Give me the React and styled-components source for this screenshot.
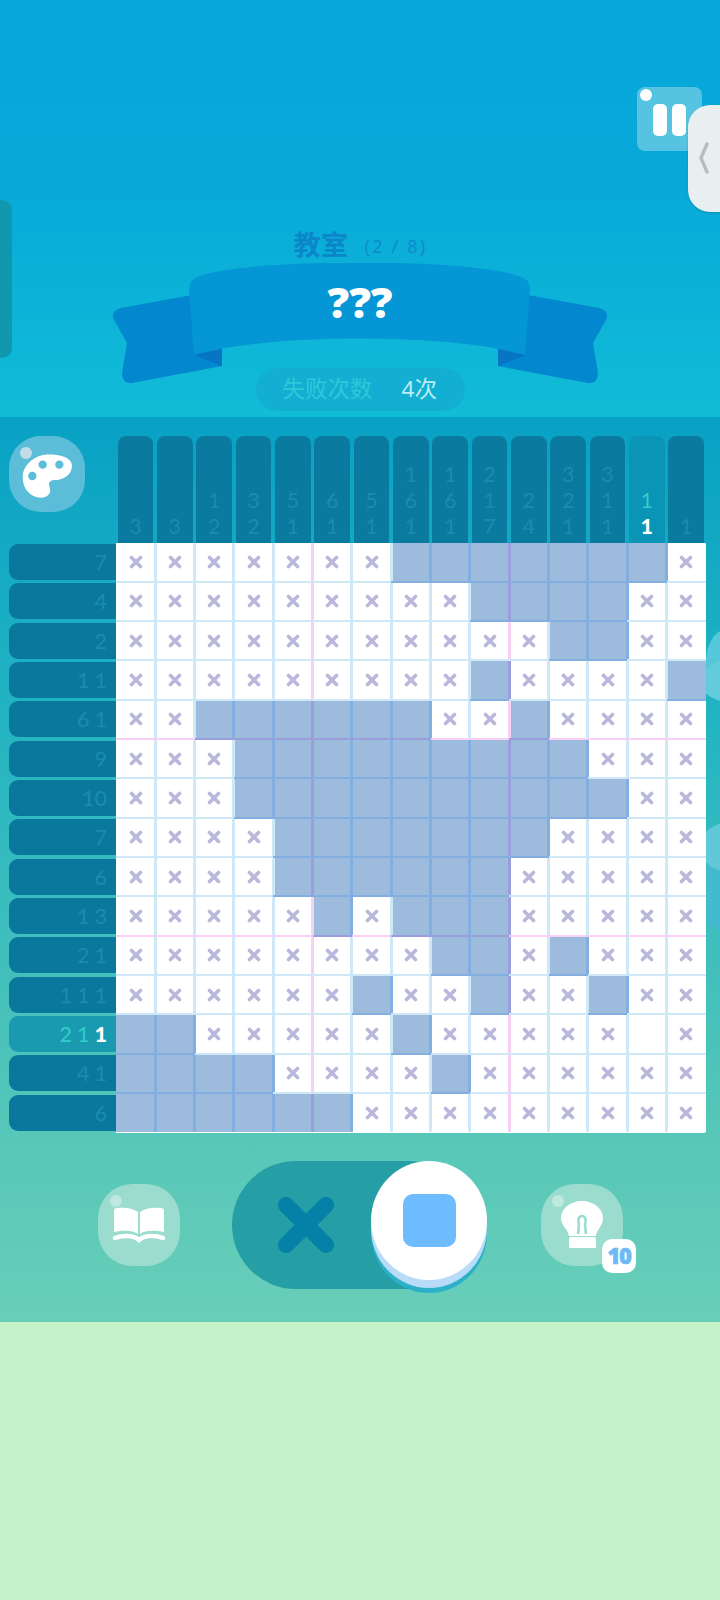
import styled, { createGlobalStyle } from "styled-components";

const GlobalStyle = createGlobalStyle`
  html, body {
    margin: 0;
    padding: 0;
    background: #c5f2c9;
  }
  * {
    box-sizing: border-box;
  }
`;

const FONT = `"Noto Sans", "Noto Sans CJK SC", sans-serif`;

const Page = styled.div`
  position: relative;
  width: 720px;
  height: 1600px;
  overflow: hidden;
  background: #c5f2c9;
  font-family: ${FONT};
`;

const Header = styled.header`
  position: relative;
  height: 417px;
  padding-top: 87px;
  display: flex;
  flex-direction: column;
  align-items: center;
  background: linear-gradient(180deg, #07a6da 0%, #08a9d9 45%, #11bcd6 100%);
`;

const PauseButton = styled.div`
  position: relative;
  align-self: flex-end;
  margin-right: 18px;
  width: 65px;
  height: 64px;
  border-radius: 8px;
  background: #57c3e2;
  display: flex;
  justify-content: center;
  gap: 5px;
  padding-top: 17px;
`;

const PauseBar = styled.span`
  width: 14px;
  height: 32px;
  border-radius: 5px;
  background: #fff;
`;

const Shine = styled.span`
  position: absolute;
  left: ${(p) => p.$left}px;
  top: ${(p) => p.$top}px;
  width: 12px;
  height: 12px;
  border-radius: 50%;
  background: ${(p) => p.$color};
`;

const SideHandle = styled.div`
  position: absolute;
  top: 105px;
  right: -20px;
  width: 52px;
  height: 107px;
  border-radius: 22px;
  background: #e9eef1;
  box-shadow: 0 1px 2px rgba(0, 60, 90, 0.25);
  padding: 37px 0 0 11px;
`;

const LeftTab = styled.div`
  position: absolute;
  top: 200px;
  left: -10px;
  width: 22px;
  height: 158px;
  border-radius: 10px;
  background: #0f98ae;
`;

const TitleRow = styled.div`
  margin-top: 74px;
  height: 37px;
  padding-left: 1px;
  display: flex;
  align-items: flex-end;
  justify-content: center;
  gap: 16px;
  color: #0a86c9;
`;

const TitleText = styled.span`
  font-size: 27px;
  line-height: 35px;
  font-weight: 700;
  letter-spacing: 0.5px;
`;

const TitleCount = styled.span`
  font-size: 18px;
  line-height: 31px;
  font-weight: 400;
  letter-spacing: 2.2px;
  color: #0d8bcc;
`;

const RibbonWrap = styled.div`
  position: relative;
  width: 496px;
  height: 121px;
  margin-top: 1px;
  padding-top: 14px;
  display: flex;
  justify-content: center;
  color: #fff;
  font-size: 43px;
  line-height: 50px;
  font-weight: 800;
  font-family: "Open Sans", sans-serif;
`;

const RibbonArt = styled.svg`
  position: absolute;
  left: 0;
  top: 0;
`;

const RibbonLabel = styled.span`
  position: relative;
`;

const Pill = styled.div`
  position: relative;
  margin-top: -16px;
  width: 209px;
  height: 43px;
  border-radius: 22px;
  background: #13afd3;
  padding: 0 0 5px 27px;
  display: flex;
  align-items: center;
  gap: 29px;
  font-size: 22.5px;
`;

const PillLabel = styled.span`
  color: #2dc9d9;
`;

const PillValue = styled.span`
  color: #b7edf3;
`;

const Board = styled.section`
  position: relative;
  height: 905px;
  background: linear-gradient(180deg, #08a1c5 0%, #22b3c2 32%, #56c7b8 79%, #69ceb9 100%);
`;

const BoardTop = styled.div`
  display: flex;
  height: 125.5px;
  padding-top: 19px;
`;

const PaletteSlot = styled.div`
  width: 116px;
  padding-left: 9px;
`;

const RoundButton = styled.div`
  position: relative;
  display: flex;
  align-items: center;
  justify-content: center;
  flex: none;
  width: ${(p) => p.$size}px;
  height: ${(p) => p.$size}px;
  border-radius: ${(p) => p.$size * 0.42}px;
  background: ${(p) => p.$color};
`;

const ColumnClues = styled.div`
  width: 590px;
  display: grid;
  grid-template-columns: repeat(15, 1fr);
`;

const ColumnClue = styled.div`
  margin: 0 2px 0 1.7px;
  border-radius: 8px 8px 0 0;
  background: ${(p) => (p.$active ? "#0a94b5" : "#0a7a9e")};
  display: flex;
  flex-direction: column;
  justify-content: flex-end;
  align-items: center;
  padding-bottom: 4px;
`;

const BoardBody = styled.div`
  display: flex;
`;

const RowClues = styled.div`
  width: 116px;
  display: grid;
  grid-template-rows: repeat(15, 1fr);
  padding-left: 9.3px;
`;

const RowClue = styled.div`
  margin: 1.6px 0 1.8px;
  border-radius: 9px 0 0 9px;
  background: ${(p) => (p.$active ? "#1a9ab0" : "#0a789c")};
  display: flex;
  justify-content: flex-end;
  align-items: center;
  gap: 5px;
  padding-right: 9px;
`;

const Digit = styled.span`
  font-family: Lato, sans-serif;
  font-size: 21.5px;
  line-height: 26px;
  font-weight: ${(p) => (p.$tone === "done" ? 900 : 400)};
  color: ${(p) =>
    p.$tone === "done" ? "#ffffff" : p.$tone === "live" ? "#31cccb" : "#1a8dab"};
`;

const Grid = styled.div`
  width: 590px;
  height: 590px;
  display: grid;
  grid-template-columns: repeat(15, 1fr);
  grid-template-rows: repeat(15, 1fr);
  background: #fff;
  border-radius: 0 2px 2px 0;
  overflow: hidden;
`;

const lineColor = (major, filled) => {
  if (major) return filled ? "#9a9fdc" : "#f8d0f4";
  return filled ? "#82aee0" : "#cfe8f8";
};

const Cell = styled.div`
  position: relative;
  display: flex;
  align-items: center;
  justify-content: center;
  background: ${(p) => (p.$filled ? "#9dbcdd" : "#fff")};

  &::after {
    content: "";
    display: ${(p) => (p.$lastCol ? "none" : "block")};
    position: absolute;
    z-index: 1;
    top: 0;
    bottom: 0;
    right: -1.5px;
    width: 3px;
    background: ${(p) => lineColor(p.$majorCol, p.$filled)};
  }

  &::before {
    content: "";
    display: ${(p) => (p.$lastRow ? "none" : "block")};
    position: absolute;
    z-index: 2;
    left: 0;
    right: 0;
    bottom: -1px;
    height: 2px;
    background: ${(p) => lineColor(p.$majorRow, p.$filled)};
  }
`;

const Controls = styled.div`
  display: flex;
  align-items: center;
  padding: 28px 0 0 98px;
`;

const Toggle = styled.div`
  position: relative;
  margin: 0 54px 0 52px;
  width: 255px;
  height: 128px;
`;

const ToggleTrack = styled.div`
  width: 240px;
  height: 128px;
  border-radius: 64px;
  background: #259ea5;
  padding: 35px 0 0 45px;
`;

const ToggleKnob = styled.div`
  position: absolute;
  top: 0;
  right: 0;
  width: 116px;
  height: 119px;
  border-radius: 50%;
  background: #fff;
  box-shadow: 0 8px 0 #b8dcf8, 0 13px 0 #2cb0c8;
  display: flex;
  align-items: center;
  justify-content: center;
`;

const KnobSquare = styled.div`
  width: 53px;
  height: 53px;
  border-radius: 10px;
  background: #6fbbff;
`;

const Badge = styled.div`
  position: absolute;
  right: -13px;
  bottom: -7px;
  width: 34px;
  height: 34px;
  border-radius: 10px;
  background: #fff;
  color: #6db9f8;
  font-family: "Open Sans", sans-serif;
  font-size: 22px;
  line-height: 33px;
  font-weight: 800;
  letter-spacing: -1.5px;
  text-align: center;
  -webkit-text-stroke: 0.6px #6db9f8;
`;

const Blob = styled.div`
  position: absolute;
  right: ${(p) => p.$right}px;
  top: ${(p) => p.$top}px;
  width: ${(p) => p.$w}px;
  height: ${(p) => p.$h}px;
  border-radius: 50%;
  background: ${(p) => p.$color};
`;

const PaletteArt = styled.svg`
  margin-top: 4px;
`;

const ROWS = [
  "xxxxxxx#######x",
  "xxxxxxxxx####xx",
  "xxxxxxxxxxx##xx",
  "xxxxxxxxx#xxxx#",
  "xx######xx#xxxx",
  "xxx#########xxx",
  "xxx##########xx",
  "xxxx#######xxxx",
  "xxxx######xxxxx",
  "xxxxx#x###xxxxx",
  "xxxxxxxx##x#xxx",
  "xxxxxx#xx#xx#xx",
  "##xxxxx#xxxxx.x",
  "####xxxx#xxxxxx",
  "######xxxxxxxxx",
];

const ROW_CLUES = [
  [7], [4], [2], [1, 1], [6, 1], [9], [10], [7], [6], [1, 3], [2, 1], [1, 1, 1], [2, 1, 1], [4, 1], [6],
];

const COLUMN_CLUES = [
  [3], [3], [1, 2], [3, 2], [5, 1], [6, 1], [5, 1], [1, 6, 1], [1, 6, 1], [2, 1, 7], [2, 4], [3, 2, 1], [3, 1, 1], [1, 1], [1],
];

const ACTIVE_ROW = 12;
const ACTIVE_COLUMN = 13;

const toneFor = (active, index, length) => {
  if (!active) return "idle";
  return index === length - 1 ? "done" : "live";
};

const Cross = () => (
  <svg width="14" height="14" viewBox="0 0 14 14">
    <path d="M2.5 2.5 L11.5 11.5 M11.5 2.5 L2.5 11.5" stroke="#b9b8dc" strokeWidth="3.6" strokeLinecap="round" />
  </svg>
);

const RIBBON_TAIL = "M80 32 L9 45 Q0 47 1 55 L15 80 L10 110 Q10 121 20 120 L110 103 V80 Z";

const Ribbon = () => (
  <RibbonArt width="496" height="121" viewBox="0 0 496 121">
    <path d={RIBBON_TAIL} fill="#0388d0" />
    <path d="M82 92 L110 86 V103 Z" fill="#0575c4" />
    <g transform="matrix(-1 0 0 1 496 0)">
      <path d={RIBBON_TAIL} fill="#0388d0" />
      <path d="M82 92 L110 86 V103 Z" fill="#0575c4" />
    </g>
    <path
      d="M77 26 Q77 16 88 13 C140 -5 356 -5 407 13 Q418 16 418 26 L413 92 C340 70 155 70 82 92 Z"
      fill="#0596d6"
    />
  </RibbonArt>
);

const PaletteIcon = () => (
  <PaletteArt width="50" height="44" viewBox="66 100 150 132">
    <path
      d="M135 102 C165 100 215 105 216 135 C216 165 185 178 165 178 C150 178 145 185 148 197 C156 215 145 231 125 231 C95 232 68 208 68 170 C68 135 100 106 135 102 Z"
      fill="#fff"
    />
    <circle cx="128" cy="132" r="12.5" fill="#5cbdd8" />
    <circle cx="178" cy="132" r="12.5" fill="#5cbdd8" />
    <circle cx="97" cy="166" r="12.5" fill="#5cbdd8" />
  </PaletteArt>
);

const BookIcon = () => (
  <svg width="52" height="36" viewBox="0 0 52 36">
    <path d="M1 4 Q1 1 4 1 C12 0 20 1 25 5 V27 C20 23 10 23 1 25 Z" fill="#fff" />
    <path d="M51 4 Q51 1 48 1 C40 0 32 1 27 5 V27 C32 23 42 23 51 25 Z" fill="#fff" />
    <path d="M2 31 C10 28 20 28 26 33 C32 28 42 28 50 31" fill="none" stroke="#fff" strokeWidth="4.5" strokeLinecap="round" />
  </svg>
);

const BulbIcon = () => (
  <svg width="42" height="48" viewBox="0 0 42 48">
    <path
      d="M21 0 C33 0 42 8 42 17 C42 25 36 28 35 35 H8 C7 28 0 25 0 17 C0 8 9 0 21 0 Z"
      fill="#fff"
    />
    <path d="M17 33 L18 24 C14 12 28 12 24 24 L25 33" fill="none" stroke="#9addcf" strokeWidth="2.6" />
    <rect x="8" y="36" width="27" height="11" rx="1.5" fill="#fff" />
  </svg>
);

const EraseIcon = () => (
  <svg width="58" height="58" viewBox="0 0 58 58">
    <path d="M9 9 L49 49 M49 9 L9 49" stroke="#0580a6" strokeWidth="16" strokeLinecap="round" />
  </svg>
);

const App = () => {
  return (
    <Page>
      <GlobalStyle />
      <Header>
        <LeftTab />
        <PauseButton>
          <Shine $left={3} $top={2} $color="#ffffff" />
          <PauseBar />
          <PauseBar />
        </PauseButton>
        <SideHandle>
          <svg width="10" height="32" viewBox="0 0 10 32">
            <path d="M8 2 L2 16 L8 30" fill="none" stroke="#b8bcbe" strokeWidth="3.4" strokeLinecap="round" />
          </svg>
        </SideHandle>
        <TitleRow>
          <TitleText>教室</TitleText>
          <TitleCount>(2 / 8)</TitleCount>
        </TitleRow>
        <RibbonWrap>
          <Ribbon />
          <RibbonLabel>???</RibbonLabel>
        </RibbonWrap>
        <Pill>
          <PillLabel>失败次数</PillLabel>
          <PillValue>4次</PillValue>
        </Pill>
      </Header>

      <Board>
        <Blob $right={-24} $top={213} $w={38} $h={66} $color="#55c7da" />
        <Blob $right={-40} $top={243} $w={60} $h={42} $color="#62cbdd" />
        <Blob $right={-40} $top={432} $w={60} $h={86} $color="#43bbce" />
        <Blob $right={-40} $top={405} $w={60} $h={50} $color="#60c8d8" />
        <BoardTop>
          <PaletteSlot>
            <RoundButton $size={76} $color="#5cbdd8">
              <Shine $left={11} $top={11} $color="#c3dde8" />
              <PaletteIcon />
            </RoundButton>
          </PaletteSlot>
          <ColumnClues>
            {COLUMN_CLUES.map((clue, col) => (
              <ColumnClue key={col} $active={col === ACTIVE_COLUMN}>
                {clue.map((n, i) => (
                  <Digit key={i} $tone={toneFor(col === ACTIVE_COLUMN, i, clue.length)}>
                    {n}
                  </Digit>
                ))}
              </ColumnClue>
            ))}
          </ColumnClues>
        </BoardTop>

        <BoardBody>
          <RowClues>
            {ROW_CLUES.map((clue, row) => (
              <RowClue key={row} $active={row === ACTIVE_ROW}>
                {clue.map((n, i) => (
                  <Digit key={i} $tone={toneFor(row === ACTIVE_ROW, i, clue.length)}>
                    {n}
                  </Digit>
                ))}
              </RowClue>
            ))}
          </RowClues>
          <Grid>
            {ROWS.flatMap((line, row) =>
              line.split("").map((mark, col) => (
                <Cell
                  key={`${row}-${col}`}
                  $filled={mark === "#"}
                  $majorCol={col % 5 === 4}
                  $majorRow={row % 5 === 4}
                  $lastCol={col === 14}
                  $lastRow={row === 14}
                >
                  {mark === "x" && <Cross />}
                </Cell>
              ))
            )}
          </Grid>
        </BoardBody>

        <Controls>
          <RoundButton $size={82} $color="#9addcf">
            <Shine $left={12} $top={11} $color="#bfe8de" />
            <BookIcon />
          </RoundButton>
          <Toggle>
            <ToggleTrack>
              <EraseIcon />
            </ToggleTrack>
            <ToggleKnob>
              <KnobSquare />
            </ToggleKnob>
          </Toggle>
          <RoundButton $size={82} $color="#9addcf">
            <Shine $left={11} $top={11} $color="#bfe8de" />
            <BulbIcon />
            <Badge>10</Badge>
          </RoundButton>
        </Controls>
      </Board>
    </Page>
  );
};

export default App;
